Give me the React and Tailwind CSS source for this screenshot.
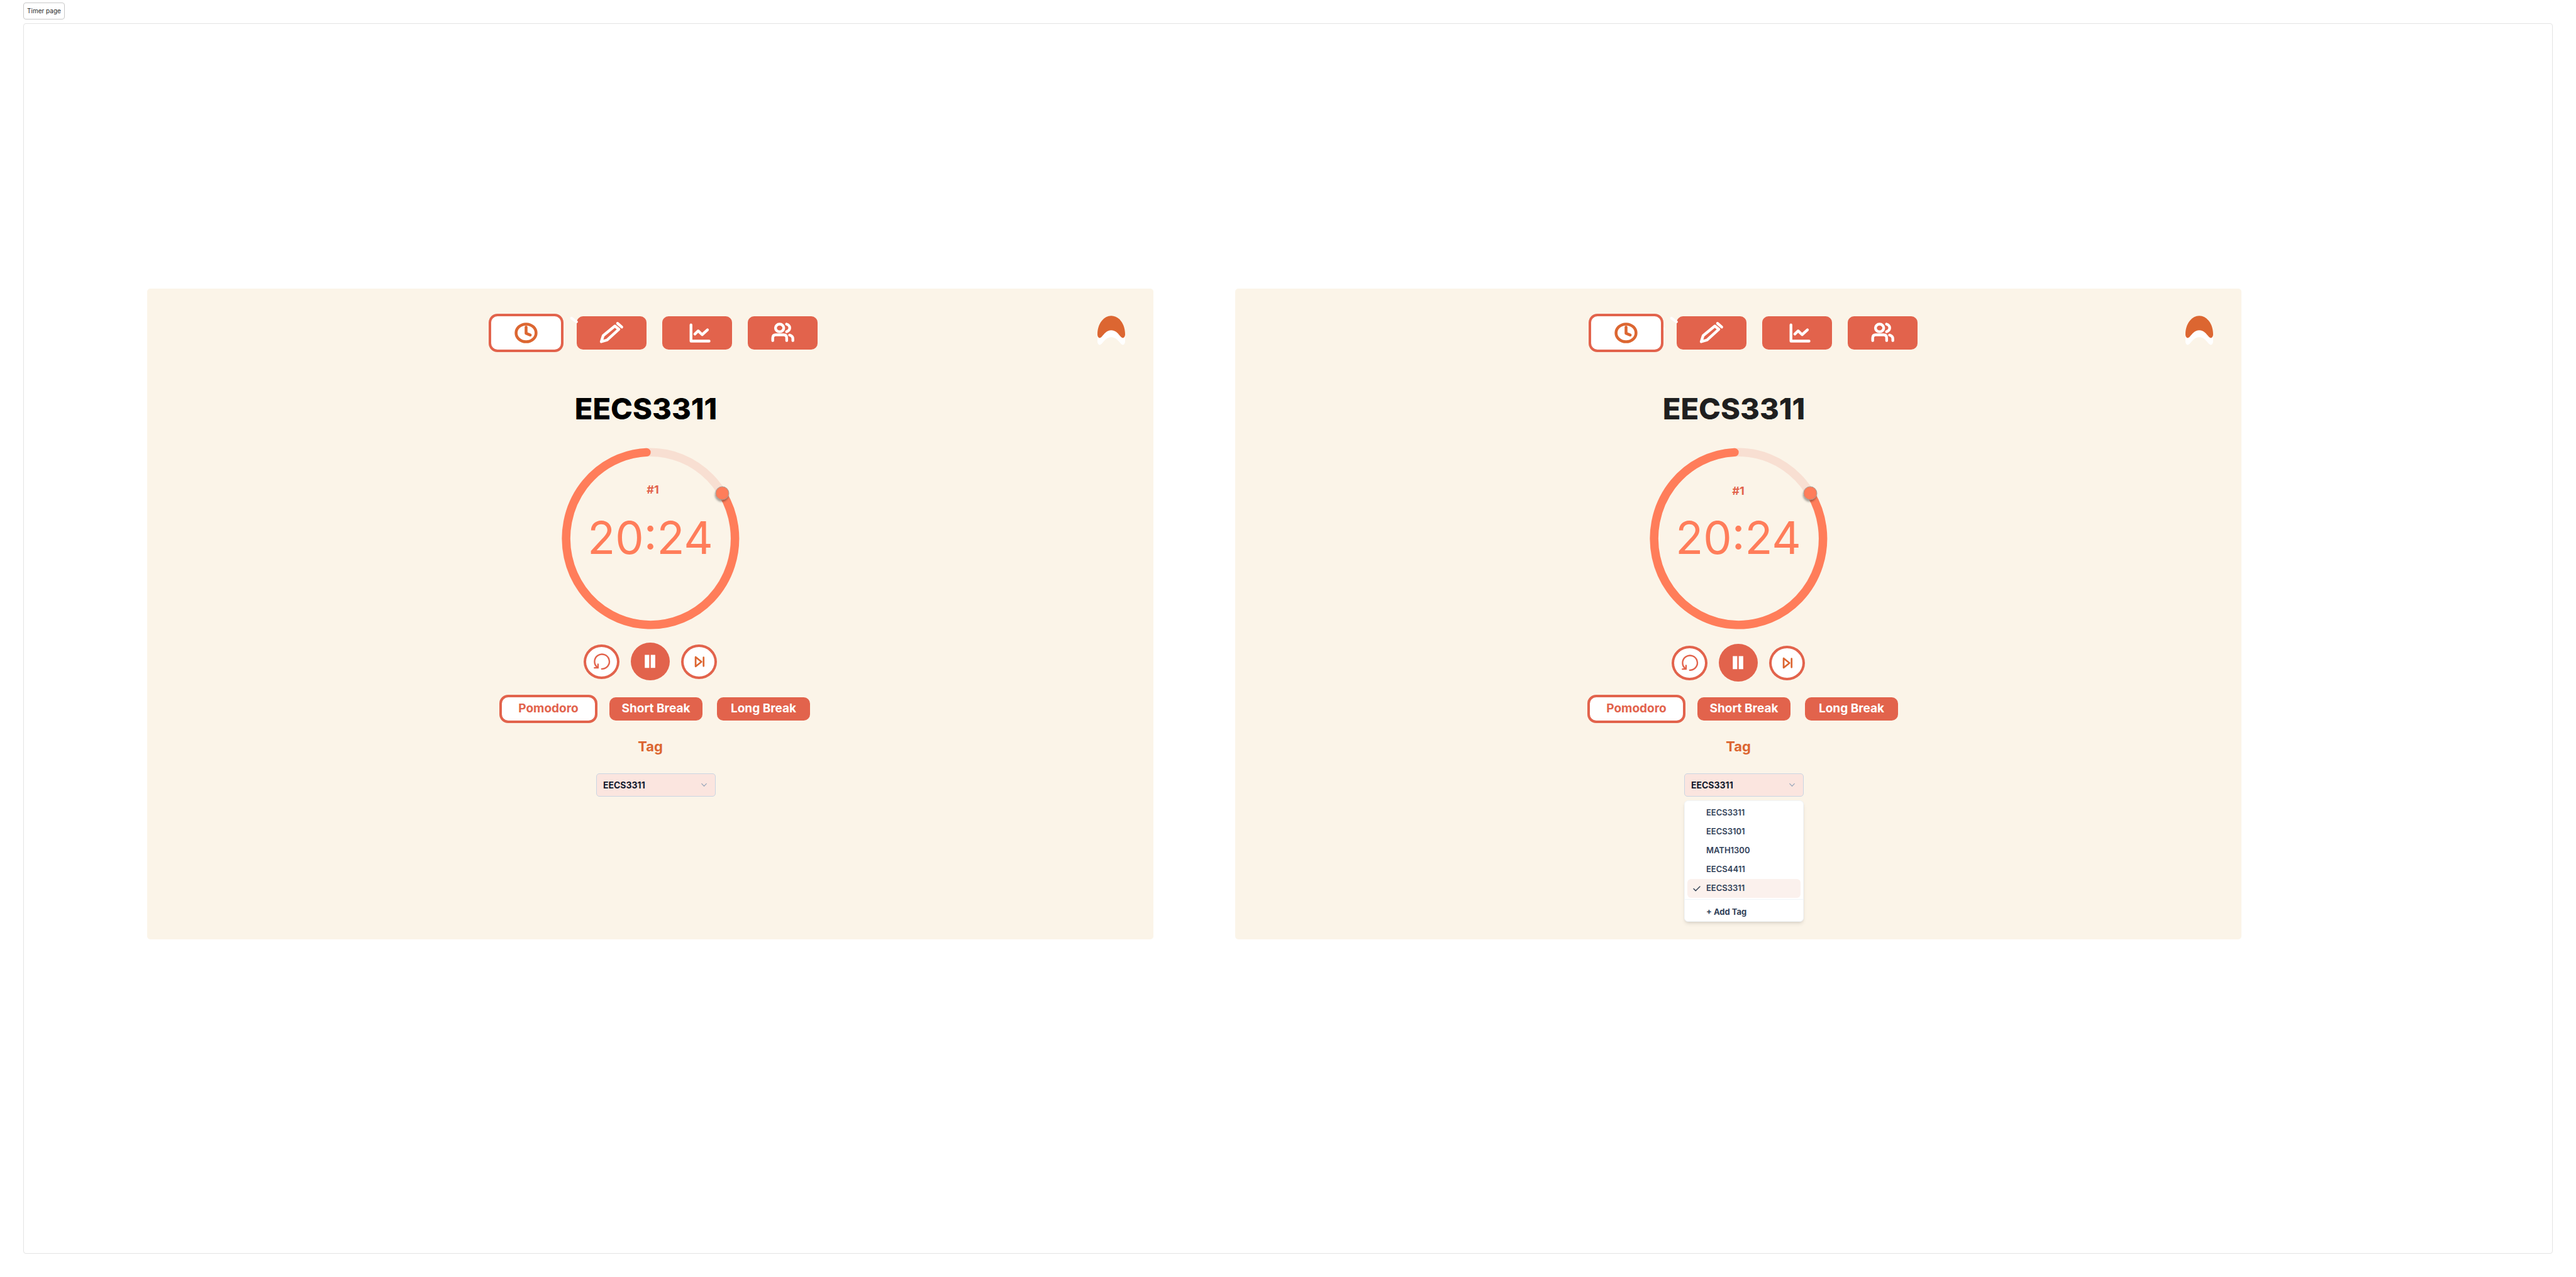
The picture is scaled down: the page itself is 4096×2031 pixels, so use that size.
const strokeProps = { fill: "none", strokeLinecap: "round", strokeLinejoin: "round" };

function ClockIcon() {
  return (
    <svg viewBox="0 0 120 58" className="size-full" stroke="#dc6631" strokeWidth="5" {...strokeProps}>
      <ellipse cx="60" cy="29" rx="17.4" ry="15.4" />
      <path d="M60 19v10.7l7.3 3.1" />
    </svg>
  );
}

function PencilIcon() {
  return (
    <svg viewBox="0 0 120 58" className="size-full" stroke="#fff" strokeWidth="4.8" {...strokeProps}>
      <path d="M42 44.2 L45.4 33.7 L65.7 17 L72.7 22.7 L52.3 41.3 Z" />
      <path d="M70.3 12.3 L77.7 18.8" />
    </svg>
  );
}

function ChartIcon() {
  return (
    <svg viewBox="0 0 120 58" className="size-full" stroke="#fff" strokeWidth="4.8" {...strokeProps}>
      <path d="M49.3 15v28.2h31.5" />
      <path d="M56 31l5.7-5.6 7 6.6 9.3-8.3" />
    </svg>
  );
}

function UsersIcon() {
  return (
    <svg viewBox="0 0 120 58" className="size-full" stroke="#fff" strokeWidth="4.8" {...strokeProps}>
      <ellipse cx="54.7" cy="20.3" rx="7.2" ry="6.6" />
      <path d="M66.7 13.7c3.6 1.2 5.6 3.6 5.6 6.6s-2 5.4-5.6 6.6" />
      <path d="M42.7 42.3v-4.5c0-3.4 2-5.5 5.5-5.5h13.3c3.5 0 5.5 2.1 5.5 5.5v4.5" />
      <path d="M72 32.7c3.7 1 5.7 3.2 5.7 6.3v3.3" />
    </svg>
  );
}

function StrayStroke({ dot }) {
  return (
    <svg viewBox="0 0 24 30" className="absolute top-0 right-full h-7 w-[22px] overflow-visible" stroke="#fff" strokeWidth="4.4" {...strokeProps}>
      <path d="M15 3L23.800 9.400" />
      {dot && <path d="M1 21l1 1" />}
    </svg>
  );
}

function NavButton({ label, active, children }) {
  return (
    <button
      aria-label={label}
      className={
        active
          ? "relative z-10 h-[61px] w-[119px] rounded-[14px] border-4 border-[#e2634c] bg-white"
          : "relative h-[53px] w-[111px] rounded-[10px] bg-[#e2634c]"
      }
    >
      {children}
    </button>
  );
}

function Avatar() {
  const shape =
    "M0 32C0 14 11 0 24 0S48 14 48 32C48 37.5 44.5 40.5 41 37C36 31.5 32 25.3 24 25.3S12 31.5 7 37C3.5 40.5 0 37.5 0 32Z";
  return (
    <svg viewBox="0 0 48 51" className="h-[47px] w-11">
      <path d="M0 32v12c0 5.500 3.500 8.500 7 5C12 43.300 16 37.100 24 37.100S36 43.300 41 49c3.500 3.500 7 .5 7-5V32L24 20Z" fill="#fff" />
      <path d={shape} fill="#dc6631" />
    </svg>
  );
}

function Ring() {
  return (
    <svg viewBox="0 0 305 312" className="h-[289px] w-[282px] overflow-visible [grid-area:1/1]" fill="none" strokeWidth="14.5">
      <defs>
        <filter id="knob-shadow" x="-50%" y="-50%" width="200%" height="200%">
          <feDropShadow dx="-1" dy="3" stdDeviation="2" floodColor="#000" floodOpacity="0.35" />
        </filter>
      </defs>
      <ellipse cx="152.500" cy="156" rx="145.200" ry="148.500" stroke="#f8dfd2" />
      <path d="M276.500 78A145.200 148.500 0 1 1 146 7.700" stroke="#ff7d5a" strokeLinecap="round" />
      <circle cx="276.300" cy="78" r="11.300" fill="#ff7d5a" stroke="#a09a94" strokeWidth="1" filter="url(#knob-shadow)" />
    </svg>
  );
}

function RestartIcon() {
  return (
    <svg viewBox="4 4 54 52" className="size-full" stroke="#e2634c" strokeWidth="2.6" {...strokeProps}>
      <path d="M31.300 42.600A13 12.900 0 1 0 24.300 40.300" />
      <path d="M18.600 40.700h6.200V34.400" />
    </svg>
  );
}

function PauseIcon() {
  return (
    <svg viewBox="0 0 67 65" className="size-full" fill="#fff">
      <path d="M24 21h7.700v22.700H24zM34.300 21H42v22.700h-7.700z" />
    </svg>
  );
}

function SkipIcon() {
  return (
    <svg viewBox="4 4 54 52" className="size-full" stroke="#dc6631" strokeWidth="3" {...strokeProps}>
      <path d="M25 21.700v16.600L35.300 30zM39 22.500v15" />
    </svg>
  );
}

function Controls({ className }) {
  const side = "h-[55px] w-[57px] rounded-[50%] border-4 border-[#e2634c] bg-white";
  return (
    <div className={`flex items-center gap-[18px] ${className}`}>
      <button aria-label="Restart" className={side}><RestartIcon /></button>
      <button aria-label="Pause" className="h-[60px] w-[62px] rounded-[50%] bg-[#e2634c]"><PauseIcon /></button>
      <button aria-label="Skip" className={side}><SkipIcon /></button>
    </div>
  );
}

function Modes({ className }) {
  const filled = "h-[37px] w-[148px] rounded-[10px] bg-[#e2634c] text-white";
  return (
    <div className={`flex items-center pl-3.5 text-[19px] font-bold ${className}`}>
      <button className="mr-[19px] h-[45px] w-[156px] rounded-[14px] border-4 border-[#e2634c] bg-white text-[#e2634c]">Pomodoro</button>
      <button className={`mr-[23px] ${filled}`}>Short Break</button>
      <button className={filled}>Long Break</button>
    </div>
  );
}

const tags = ["EECS3311", "EECS3101", "MATH1300", "EECS4411", "EECS3311"];

function TagMenu() {
  return (
    <div className="absolute top-[43px] right-0 left-0 rounded-md border border-slate-100 bg-white text-[13px] text-slate-700 shadow-md">
      <ul role="listbox" aria-label="Tags" className="border-b border-slate-100 px-1 pt-1 pb-0.5 font-semibold">
        {tags.map((tag, i) => {
          const selected = i === tags.length - 1;
          return (
            <li
              key={i}
              role="option"
              aria-selected={selected}
              className={`flex h-[30px] items-center rounded-md ${selected ? "bg-[#fbf1ed]" : ""}`}
            >
              <span className="flex w-[30px] justify-center">
                {selected && (
                  <svg viewBox="0 0 13 10" className="h-[9px] w-3" stroke="#334155" strokeWidth="1.6" {...strokeProps}>
                    <path d="M1 5l3.500 3.700L12 1" />
                  </svg>
                )}
              </span>
              {tag}
            </li>
          );
        })}
      </ul>
      <button className="mt-1.5 block h-7 w-full pl-[34px] text-left font-bold">+ Add Tag</button>
    </div>
  );
}

function TagSelect({ id, open }) {
  return (
    <>
      <label htmlFor={id} className="mt-[22px] text-[22px] leading-[30px] font-bold text-[#dc6631]">Tag</label>
      <div className="mt-7 pl-[18px]">
        <div className="relative">
          <select
            id={id}
            className="block h-[37px] w-[190px] appearance-none rounded-[5px] border border-slate-300 bg-[#fbe5df] pl-2.5 text-sm font-bold text-slate-900"
          >
            <option>EECS3311</option>
            <option>EECS3101</option>
            <option>MATH1300</option>
            <option>EECS4411</option>
          </select>
          <svg viewBox="0 0 10 6" className="pointer-events-none absolute top-4 right-3.5 h-[5px] w-[9px] overflow-visible" stroke="#94a3b8" strokeWidth="1.4" {...strokeProps}>
            <path d="M.5 .5L5 5.300L9.500 .5" />
          </svg>
          {open && <TagMenu />}
        </div>
      </div>
    </>
  );
}

function TimerCard({ id, open }) {
  return (
    <section className="flex flex-1 flex-col items-center rounded-[5px] bg-[#fbf4e8] pt-10 pb-[227px]">
      <header className="grid w-full grid-cols-[1fr_auto_1fr]">
        <nav className={`col-start-2 flex items-center ${open ? "pl-[47px]" : "pl-2"}`}>
          <div className="mr-[21px] flex"><NavButton label="Timer" active><ClockIcon /></NavButton></div>
          <div className="flex gap-[25px]">
            <NavButton label="Tasks">
              <StrayStroke dot={open} />
              <PencilIcon />
            </NavButton>
            <NavButton label="Statistics"><ChartIcon /></NavButton>
            <NavButton label="Friends"><UsersIcon /></NavButton>
          </div>
        </nav>
        <button aria-label="Account" className="mt-[3px] mr-[45px] self-start justify-self-end"><Avatar /></button>
      </header>
      <h1 className={`mt-[60px] pr-3.5 text-[47px] leading-[60px] font-extrabold ${open ? "text-[#1f1f1f]" : "text-black"}`}>EECS3311</h1>
      <div className="mt-8 grid justify-items-center">
        <Ring />
        <p className={`text-lg leading-5 font-bold text-[#e2634c] [grid-area:1/1] ${open ? "pt-[59px]" : "pt-[57px] pl-2"}`}>#1</p>
        <p className="self-center pb-1 text-7xl text-[#ff7d5a] [grid-area:1/1]">20:24</p>
      </div>
      <Controls className={open ? "mt-[23px]" : "mt-[21px]"} />
      <Modes className={open ? "mt-[21px]" : "mt-[23px]"} />
      <TagSelect id={id} open={open} />
    </section>
  );
}

export default function App() {
  return (
    <div className="flex min-h-screen flex-col bg-white px-[37px] pt-1 pb-[37px] font-['Inter',sans-serif]">
      <div className="flex h-[27px] items-center self-start rounded-sm border border-[#c8c8c8] px-[5px] text-[10px] text-[#1f1f1f]">Timer page</div>
      <main className="mt-1.5 flex flex-1 items-start gap-[130px] rounded-sm border border-[#e4e4e4] pt-[421px] pr-[494px] pl-[196px]">
        <TimerCard id="tag-closed" />
        <TimerCard id="tag-open" open />
      </main>
    </div>
  );
}
